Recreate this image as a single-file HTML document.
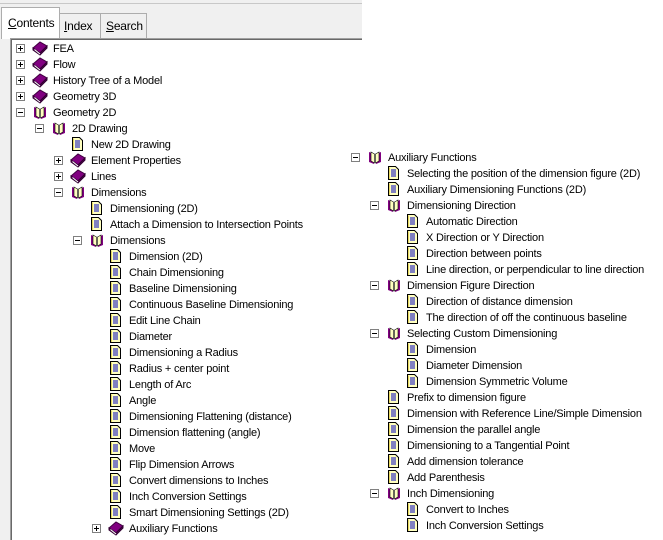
<!DOCTYPE html><html><head><meta charset="utf-8"><style>
body{margin:0;width:663px;height:540px;background:#fff;position:relative;overflow:hidden;font-family:"Liberation Sans",Arial,sans-serif;font-size:11px;color:#000}
.a{position:absolute}
.r{position:absolute;height:16px;line-height:16px;white-space:nowrap;padding-top:1px;letter-spacing:-0.2px}
svg{position:absolute}
</style></head><body>
<svg width="0" height="0" style="position:absolute">
<defs>
<symbol id="p" viewBox="0 0 9 9"><rect x="0.5" y="0.5" width="8" height="8" fill="#fff" stroke="#808080"/><path d="M2 4.5h5M4.5 2v5" stroke="#000"/></symbol>
<symbol id="m" viewBox="0 0 9 9"><rect x="0.5" y="0.5" width="8" height="8" fill="#fff" stroke="#808080"/><path d="M2 4.5h5" stroke="#000"/></symbol>
<symbol id="b" viewBox="0 0 16 16"><path d="M1 8L8 2L15 6L8 13Z" fill="#800080" stroke="#400040"/><path d="M1 8L1 10L8 15L15 8L15 6L8 13Z" fill="#5a005a" stroke="#300030"/><path d="M2.5 9.5L8 14" stroke="#fff"/></symbol>
<symbol id="o" viewBox="0 0 16 16"><path d="M2 3L7 5L7 15L2 13Z" fill="#800080"/><path d="M14 3L9 5L9 15L14 13Z" fill="#800080"/><path d="M4 3L7.5 5L7.5 14L4 12Z" fill="#ffffc0" stroke="#000" stroke-width=".6"/><path d="M12 3L8.5 5L8.5 14L12 12Z" fill="#ffffc0" stroke="#000" stroke-width=".6"/></symbol>
<symbol id="d" viewBox="0 0 16 16"><path d="M2.5 1.5h7l3 3v10h-10z" fill="#ffffc0" stroke="#000"/><path d="M5 5h5M5 7h5M5 9h5M5 11h5" stroke="#0000c0" stroke-width="1"/><path d="M3.5 2.5v11.5" stroke="#e8d860"/></symbol>
</defs></svg>
<div class="a" style="left:0;top:0;width:362px;height:40px;background:#f0f0f0"></div>
<div class="a" style="left:0;top:3px;width:362px;height:1px;background:#c8c8c8"></div>
<div class="a" style="left:0;top:40px;width:10px;height:500px;background:#f0f0f0"></div>
<div class="a" style="left:1px;top:7px;width:57px;height:31px;background:#fff;border:1px solid #adadad;border-bottom:none"></div>
<div class="a" style="left:59px;top:13px;width:40px;height:25px;background:#f0f0f0;border:1px solid #adadad;border-bottom:none"></div>
<div class="a" style="left:100px;top:13px;width:45px;height:25px;background:#f0f0f0;border:1px solid #adadad;border-bottom:none"></div>
<div class="r" style="left:8px;top:14px;font-size:12px"><u>C</u>ontents</div>
<div class="r" style="left:64px;top:17px;font-size:12px"><u>I</u>ndex</div>
<div class="r" style="left:106px;top:17px;font-size:12px"><u>S</u>earch</div>
<div class="a" style="left:10px;top:38px;width:352px;height:1px;background:#a0a0a0"></div>
<div class="a" style="left:11px;top:39px;width:351px;height:1px;background:#696969"></div>
<div class="a" style="left:10px;top:38px;width:1px;height:502px;background:#a0a0a0"></div>
<div class="a" style="left:11px;top:39px;width:1px;height:501px;background:#696969"></div>

<svg style="left:16px;top:44px" width="9" height="9"><use href="#p"/></svg><svg style="left:32px;top:40px" width="16" height="16"><use href="#b"/></svg><div class="r" style="left:53px;top:40px">FEA</div>
<svg style="left:16px;top:60px" width="9" height="9"><use href="#p"/></svg><svg style="left:32px;top:56px" width="16" height="16"><use href="#b"/></svg><div class="r" style="left:53px;top:56px">Flow</div>
<svg style="left:16px;top:76px" width="9" height="9"><use href="#p"/></svg><svg style="left:32px;top:72px" width="16" height="16"><use href="#b"/></svg><div class="r" style="left:53px;top:72px">History Tree of a Model</div>
<svg style="left:16px;top:92px" width="9" height="9"><use href="#p"/></svg><svg style="left:32px;top:88px" width="16" height="16"><use href="#b"/></svg><div class="r" style="left:53px;top:88px">Geometry 3D</div>
<svg style="left:16px;top:108px" width="9" height="9"><use href="#m"/></svg><svg style="left:32px;top:104px" width="16" height="16"><use href="#o"/></svg><div class="r" style="left:53px;top:104px">Geometry 2D</div>
<svg style="left:35px;top:124px" width="9" height="9"><use href="#m"/></svg><svg style="left:51px;top:120px" width="16" height="16"><use href="#o"/></svg><div class="r" style="left:72px;top:120px">2D Drawing</div>
<svg style="left:70px;top:136px" width="16" height="16"><use href="#d"/></svg><div class="r" style="left:91px;top:136px">New 2D Drawing</div>
<svg style="left:54px;top:156px" width="9" height="9"><use href="#p"/></svg><svg style="left:70px;top:152px" width="16" height="16"><use href="#b"/></svg><div class="r" style="left:91px;top:152px">Element Properties</div>
<svg style="left:54px;top:172px" width="9" height="9"><use href="#p"/></svg><svg style="left:70px;top:168px" width="16" height="16"><use href="#b"/></svg><div class="r" style="left:91px;top:168px">Lines</div>
<svg style="left:54px;top:188px" width="9" height="9"><use href="#m"/></svg><svg style="left:70px;top:184px" width="16" height="16"><use href="#o"/></svg><div class="r" style="left:91px;top:184px">Dimensions</div>
<svg style="left:89px;top:200px" width="16" height="16"><use href="#d"/></svg><div class="r" style="left:110px;top:200px">Dimensioning (2D)</div>
<svg style="left:89px;top:216px" width="16" height="16"><use href="#d"/></svg><div class="r" style="left:110px;top:216px">Attach a Dimension to Intersection Points</div>
<svg style="left:73px;top:236px" width="9" height="9"><use href="#m"/></svg><svg style="left:89px;top:232px" width="16" height="16"><use href="#o"/></svg><div class="r" style="left:110px;top:232px">Dimensions</div>
<svg style="left:108px;top:248px" width="16" height="16"><use href="#d"/></svg><div class="r" style="left:129px;top:248px">Dimension (2D)</div>
<svg style="left:108px;top:264px" width="16" height="16"><use href="#d"/></svg><div class="r" style="left:129px;top:264px">Chain Dimensioning</div>
<svg style="left:108px;top:280px" width="16" height="16"><use href="#d"/></svg><div class="r" style="left:129px;top:280px">Baseline Dimensioning</div>
<svg style="left:108px;top:296px" width="16" height="16"><use href="#d"/></svg><div class="r" style="left:129px;top:296px">Continuous Baseline Dimensioning</div>
<svg style="left:108px;top:312px" width="16" height="16"><use href="#d"/></svg><div class="r" style="left:129px;top:312px">Edit Line Chain</div>
<svg style="left:108px;top:328px" width="16" height="16"><use href="#d"/></svg><div class="r" style="left:129px;top:328px">Diameter</div>
<svg style="left:108px;top:344px" width="16" height="16"><use href="#d"/></svg><div class="r" style="left:129px;top:344px">Dimensioning a Radius</div>
<svg style="left:108px;top:360px" width="16" height="16"><use href="#d"/></svg><div class="r" style="left:129px;top:360px">Radius + center point</div>
<svg style="left:108px;top:376px" width="16" height="16"><use href="#d"/></svg><div class="r" style="left:129px;top:376px">Length of Arc</div>
<svg style="left:108px;top:392px" width="16" height="16"><use href="#d"/></svg><div class="r" style="left:129px;top:392px">Angle</div>
<svg style="left:108px;top:408px" width="16" height="16"><use href="#d"/></svg><div class="r" style="left:129px;top:408px">Dimensioning Flattening (distance)</div>
<svg style="left:108px;top:424px" width="16" height="16"><use href="#d"/></svg><div class="r" style="left:129px;top:424px">Dimension flattening (angle)</div>
<svg style="left:108px;top:440px" width="16" height="16"><use href="#d"/></svg><div class="r" style="left:129px;top:440px">Move</div>
<svg style="left:108px;top:456px" width="16" height="16"><use href="#d"/></svg><div class="r" style="left:129px;top:456px">Flip Dimension Arrows</div>
<svg style="left:108px;top:472px" width="16" height="16"><use href="#d"/></svg><div class="r" style="left:129px;top:472px">Convert dimensions to Inches</div>
<svg style="left:108px;top:488px" width="16" height="16"><use href="#d"/></svg><div class="r" style="left:129px;top:488px">Inch Conversion Settings</div>
<svg style="left:108px;top:504px" width="16" height="16"><use href="#d"/></svg><div class="r" style="left:129px;top:504px">Smart Dimensioning Settings (2D)</div>
<svg style="left:92px;top:524px" width="9" height="9"><use href="#p"/></svg><svg style="left:108px;top:520px" width="16" height="16"><use href="#b"/></svg><div class="r" style="left:129px;top:520px">Auxiliary Functions</div>

<svg style="left:351px;top:153px" width="9" height="9"><use href="#m"/></svg><svg style="left:367px;top:149px" width="16" height="16"><use href="#o"/></svg><div class="r" style="left:388px;top:149px">Auxiliary Functions</div>
<svg style="left:386px;top:165px" width="16" height="16"><use href="#d"/></svg><div class="r" style="left:407px;top:165px">Selecting the position of the dimension figure (2D)</div>
<svg style="left:386px;top:181px" width="16" height="16"><use href="#d"/></svg><div class="r" style="left:407px;top:181px">Auxiliary Dimensioning Functions (2D)</div>
<svg style="left:370px;top:201px" width="9" height="9"><use href="#m"/></svg><svg style="left:386px;top:197px" width="16" height="16"><use href="#o"/></svg><div class="r" style="left:407px;top:197px">Dimensioning Direction</div>
<svg style="left:405px;top:213px" width="16" height="16"><use href="#d"/></svg><div class="r" style="left:426px;top:213px">Automatic Direction</div>
<svg style="left:405px;top:229px" width="16" height="16"><use href="#d"/></svg><div class="r" style="left:426px;top:229px">X Direction or Y Direction</div>
<svg style="left:405px;top:245px" width="16" height="16"><use href="#d"/></svg><div class="r" style="left:426px;top:245px">Direction between points</div>
<svg style="left:405px;top:261px" width="16" height="16"><use href="#d"/></svg><div class="r" style="left:426px;top:261px">Line direction, or perpendicular to line direction</div>
<svg style="left:370px;top:281px" width="9" height="9"><use href="#m"/></svg><svg style="left:386px;top:277px" width="16" height="16"><use href="#o"/></svg><div class="r" style="left:407px;top:277px">Dimension Figure Direction</div>
<svg style="left:405px;top:293px" width="16" height="16"><use href="#d"/></svg><div class="r" style="left:426px;top:293px">Direction of distance dimension</div>
<svg style="left:405px;top:309px" width="16" height="16"><use href="#d"/></svg><div class="r" style="left:426px;top:309px">The direction of off the continuous baseline</div>
<svg style="left:370px;top:329px" width="9" height="9"><use href="#m"/></svg><svg style="left:386px;top:325px" width="16" height="16"><use href="#o"/></svg><div class="r" style="left:407px;top:325px">Selecting Custom Dimensioning</div>
<svg style="left:405px;top:341px" width="16" height="16"><use href="#d"/></svg><div class="r" style="left:426px;top:341px">Dimension</div>
<svg style="left:405px;top:357px" width="16" height="16"><use href="#d"/></svg><div class="r" style="left:426px;top:357px">Diameter Dimension</div>
<svg style="left:405px;top:373px" width="16" height="16"><use href="#d"/></svg><div class="r" style="left:426px;top:373px">Dimension Symmetric Volume</div>
<svg style="left:386px;top:389px" width="16" height="16"><use href="#d"/></svg><div class="r" style="left:407px;top:389px">Prefix to dimension figure</div>
<svg style="left:386px;top:405px" width="16" height="16"><use href="#d"/></svg><div class="r" style="left:407px;top:405px">Dimension with Reference Line/Simple Dimension</div>
<svg style="left:386px;top:421px" width="16" height="16"><use href="#d"/></svg><div class="r" style="left:407px;top:421px">Dimension the parallel angle</div>
<svg style="left:386px;top:437px" width="16" height="16"><use href="#d"/></svg><div class="r" style="left:407px;top:437px">Dimensioning to a Tangential Point</div>
<svg style="left:386px;top:453px" width="16" height="16"><use href="#d"/></svg><div class="r" style="left:407px;top:453px">Add dimension tolerance</div>
<svg style="left:386px;top:469px" width="16" height="16"><use href="#d"/></svg><div class="r" style="left:407px;top:469px">Add Parenthesis</div>
<svg style="left:370px;top:489px" width="9" height="9"><use href="#m"/></svg><svg style="left:386px;top:485px" width="16" height="16"><use href="#o"/></svg><div class="r" style="left:407px;top:485px">Inch Dimensioning</div>
<svg style="left:405px;top:501px" width="16" height="16"><use href="#d"/></svg><div class="r" style="left:426px;top:501px">Convert to Inches</div>
<svg style="left:405px;top:517px" width="16" height="16"><use href="#d"/></svg><div class="r" style="left:426px;top:517px">Inch Conversion Settings</div>
</body></html>
